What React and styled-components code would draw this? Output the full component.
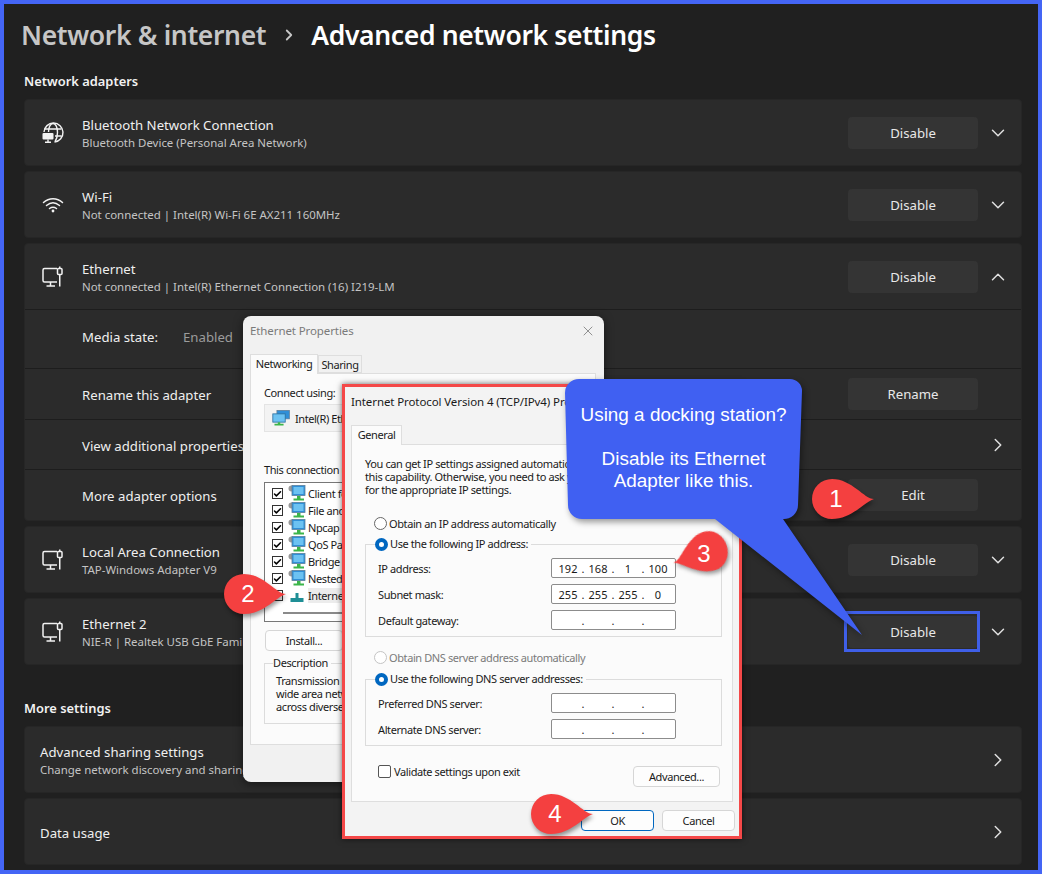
import React from "react";
import styled, { createGlobalStyle } from "styled-components";
import { ChevronDown, ChevronRight, ChevronUp, Check, X } from "lucide-react";

const GlobalStyle = createGlobalStyle`
  * { box-sizing: border-box; }
  html, body { margin: 0; padding: 0; background: #202020; }
`;

const Page = styled.div`
  position: relative;
  width: 1042px;
  height: 874px;
  overflow: hidden;
  padding: 0 16px 0 20px;
  border: 4px solid #4465f5;
  background: #202020;
  color: #fff;
  font-family: "Noto Sans", sans-serif;
`;

const Breadcrumb = styled.h1`
  display: flex;
  align-items: center;
  height: 62px;
  margin: 0 0 0 -3px;
  font-size: 26.5px;
  font-weight: 600;
  letter-spacing: -0.35px;
`;

const Crumb = styled.span`
  color: #c6c6c6;
`;

const CrumbSep = styled.span`
  display: flex;
  width: 45px;
  justify-content: center;
  color: #c6c6c6;
`;

const SectionTitle = styled.h2`
  margin: ${(p) => p.$top || 0}px 0 0;
  height: 33px;
  font-size: 12.9px;
  line-height: 30px;
  font-weight: 600;
  color: #f2f2f2;
`;

const Card = styled.section`
  display: flex;
  flex-direction: column;
  margin-bottom: 5px;
  border-radius: 4px;
  background: #2b2b2b;
  border: 1px solid #262626;
`;

const Row = styled.div`
  display: flex;
  align-items: center;
  height: ${(p) => p.$h || 65}px;
  padding: 0 11px ${(p) => p.$bottom || 0}px ${(p) => p.$left || 57}px;
  border-top: ${(p) => (p.$line ? "1px solid #1d1d1d" : "none")};
`;

const RowIcon = styled.span`
  display: flex;
  width: 24px;
  margin-left: -41px;
  margin-right: 17px;
  color: #f2f2f2;
`;

const RowText = styled.div`
  flex: 1;
  min-width: 0;
  padding-top: 2px;
`;

const RowTitle = styled.div`
  font-size: 13.2px;
  line-height: 18px;
  color: #efefef;
`;

const RowSub = styled.div`
  font-size: 11.45px;
  line-height: 17px;
  color: #c4c4c4;
`;

const StateLabel = styled.span`
  width: 101px;
  font-size: 13.2px;
  color: #efefef;
`;

const StateValue = styled.span`
  font-size: 13.2px;
  color: #9c9c9c;
`;

const ActionButton = styled.div`
  display: flex;
  width: 130px;
  height: 32px;
  align-items: center;
  justify-content: center;
  border-radius: 4px;
  background: #343434;
  font-size: 13.2px;
  color: #e8e8e8;
`;

const ChevronSlot = styled.span`
  display: flex;
  width: 24px;
  margin-left: 8px;
  justify-content: center;
  color: #e0e0e0;
`;

const Window = styled.div`
  position: absolute;
  display: flex;
  flex-direction: column;
  font-family: "Noto Sans", sans-serif;
  color: #1a1a1a;
  font-size: 11px;
  letter-spacing: -0.4px;
`;

const PropsWindow = styled(Window)`
  left: 239px;
  top: 312px;
  width: 361px;
  height: 466px;
  padding: 0 8px 0 7px;
  border-radius: 8px;
  background: #f1f1f1;
  box-shadow: 0 2px 10px rgba(0, 0, 0, 0.5);
`;

const IpWindow = styled(Window)`
  left: 338px;
  top: 380px;
  width: 400px;
  height: 455px;
  padding: 0 6px;
  border: 3px solid #f44848;
  background: #f3f3f3;
  box-shadow: 0 0 6px rgba(0, 0, 0, 0.6);
`;

const TitleBar = styled.div`
  display: flex;
  align-items: center;
  justify-content: space-between;
  height: ${(p) => p.$h}px;
  font-size: 11.5px;
  letter-spacing: -0.1px;
  color: ${(p) => p.$color};
`;

const Tabs = styled.div`
  display: flex;
  align-items: flex-end;
  height: ${(p) => p.$h}px;
`;

const Tab = styled.div`
  position: relative;
  display: flex;
  align-items: center;
  justify-content: center;
  width: ${(p) => p.$w}px;
  height: ${(p) => (p.$active ? 20 : 18)}px;
  padding-bottom: ${(p) => (p.$active ? 2 : 0)}px;
  margin-bottom: ${(p) => (p.$active ? -1 : 0)}px;
  border: 1px solid #dedede;
  border-bottom: ${(p) => (p.$active ? "none" : "1px solid #dedede")};
  background: ${(p) => (p.$active ? "#fbfbfb" : "#f1f1f1")};
`;

const TabPanel = styled.div`
  display: flex;
  flex-direction: column;
  height: ${(p) => p.$h}px;
  padding: ${(p) => p.$pad};
  border: 1px solid #dedede;
  background: #fbfbfb;
  overflow: hidden;
`;

const Label = styled.div`
  height: 14px;
  line-height: 14px;
  margin-top: ${(p) => p.$top || 0}px;
  white-space: nowrap;
`;

const IntroLine = styled.div`
  height: 13px;
  line-height: 13px;
  white-space: nowrap;
`;

const AdapterBox = styled.div`
  display: flex;
  align-items: center;
  gap: 4px;
  height: 28px;
  margin-top: 4px;
  padding-left: 7px;
  border: 1px solid #e4e4e4;
  background: #f3f3f3;
`;

const ItemList = styled.div`
  height: 140px;
  margin-top: 5px;
  padding: 2px 0 0 7px;
  border: 1px solid #777;
  background: #fff;
  overflow: hidden;
`;

const Item = styled.div`
  display: flex;
  align-items: center;
  gap: 2px;
  height: 17px;
  white-space: nowrap;
`;

const ItemName = styled.span`
  background: ${(p) => (p.$selected ? "#ececec" : "transparent")};
`;

const CheckMark = styled.span`
  display: flex;
  flex: none;
  width: 11px;
  height: 11px;
  align-items: center;
  justify-content: center;
  margin-right: 3px;
  border: 1px solid #333;
  background: #fff;
  color: #000;
`;

const ListBar = styled.div`
  width: 200px;
  height: 2px;
  margin: 8px 0 0 11px;
  background: #8a8a8a;
`;

const PlainButton = styled.div`
  display: flex;
  align-items: center;
  justify-content: center;
  flex: none;
  width: ${(p) => p.$w}px;
  height: 21px;
  border: 1px solid ${(p) => (p.$primary ? "#0067c0" : "#d6d6d6")};
  border-radius: 4px;
  background: #fdfdfd;
`;

const Group = styled.fieldset`
  margin: ${(p) => p.$top || 0}px ${(p) => p.$right || 0}px 0 0;
  padding: ${(p) => p.$pad || "0"};
  border: 1px solid #dcdcdc;
  border-radius: 0;
  height: ${(p) => p.$h}px;
  min-width: 0;
  overflow: hidden;
`;

const Legend = styled.legend`
  display: flex;
  align-items: center;
  gap: 2px;
  margin-left: ${(p) => p.$left || 0}px;
  padding: 0 3px 0 0;
  height: 14px;
  line-height: 14px;
`;

const RadioLine = styled.div`
  display: flex;
  align-items: center;
  gap: 2px;
  height: 14px;
  margin: ${(p) => p.$top || 0}px 0 ${(p) => p.$bottom || 7}px 9px;
  color: ${(p) => (p.$off ? "#7a7a7a" : "inherit")};
`;

const Radio = styled.span`
  flex: none;
  width: 13px;
  height: 13px;
  border-radius: 50%;
  background: #fff;
  border: ${(p) => (p.$on ? "4px solid #0067c0" : `1px solid ${p.$off ? "#c4c4c4" : "#666"}`)};
`;

const FieldRow = styled.div`
  display: flex;
  align-items: center;
  justify-content: space-between;
  height: 20px;
  margin-bottom: 6px;
`;

const IpInput = styled.div`
  display: grid;
  grid-template-columns: 26px 4px 26px 4px 26px 4px 26px;
  align-items: center;
  width: 125px;
  height: 20px;
  padding-left: 3px;
  border: 1px solid #8c8c8c;
  border-radius: 2px;
  background: #fff;
  text-align: center;
  letter-spacing: 0;
`;

const ValidateRow = styled.div`
  display: flex;
  align-items: flex-start;
  justify-content: space-between;
  margin: 20px 12px 0 13px;
`;

const ValidateCheck = styled.div`
  display: flex;
  align-items: center;
  gap: 3px;
  height: 14px;
  margin-top: -2px;
`;

const EmptyBox = styled.span`
  width: 13px;
  height: 13px;
  border: 1px solid #555;
  border-radius: 2px;
  background: #fff;
`;

const FooterRow = styled.div`
  display: flex;
  justify-content: flex-end;
  gap: 8px;
  margin-right: -2px;
  padding-top: 8px;
`;

const ButtonRow = styled.div`
  display: flex;
  margin-top: 8px;
  padding-left: 1px;
`;

const DescText = styled.div`
  padding-left: 11px;
  line-height: 13px;
  white-space: nowrap;
`;

const Bubble = styled.div`
  position: absolute;
  left: 561px;
  top: 371px;
  width: 300px;
  height: 260px;
`;

const BubbleShape = styled.svg`
  position: absolute;
  inset: 0;
  filter: drop-shadow(2px 3px 3px rgba(0, 0, 0, 0.4));
`;

const BubbleText = styled.div`
  position: relative;
  width: 237px;
  padding-top: 29px;
  font-family: "Liberation Sans", sans-serif;
  font-size: 18.9px;
  line-height: 22px;
  text-align: center;
  color: #fff;
`;

const Highlight = styled.div`
  position: absolute;
  left: 840px;
  top: 607px;
  width: 136px;
  height: 41px;
  border: 3px solid #3f5fe8;
`;

const PinBox = styled.div`
  position: absolute;
  left: ${(p) => p.$x}px;
  top: ${(p) => p.$y}px;
  display: flex;
  justify-content: ${(p) => (p.$flip ? "flex-end" : "flex-start")};
  width: ${(p) => (p.$flip ? 56 : 62)}px;
  height: 42px;
`;

const PinShape = styled.svg`
  position: absolute;
  inset: 0;
  overflow: visible;
  transform: ${(p) => (p.$flip ? "scaleX(-1) rotate(18deg)" : "none")};
  filter: drop-shadow(${(p) => (p.$flip ? "-1px" : "1px")} 3px 2px rgba(0, 0, 0, 0.4));
`;

const PinNumber = styled.span`
  position: relative;
  width: 48px;
  line-height: 42px;
  text-align: center;
  font-family: "Liberation Sans", sans-serif;
  font-size: 24px;
  color: #fff;
`;

const ListIcon = styled.svg`
  flex: none;
`;

const Monitor = () => (
  <svg width="24" height="24" viewBox="0 0 24 24" fill="none" stroke="currentColor" strokeWidth="1.5">
    <path d="M16 3.500H3.500A1.500 1.500 0 0 0 2 5V15.500A1.500 1.500 0 0 0 3.500 17H16" />
    <path d="M9.500 17V20.500M5.500 21H14" />
    <rect x="16.500" y="3.500" width="4.500" height="6" rx="1" />
    <path d="M18.750 1.500V3.500M18.750 9.500V21.500" />
  </svg>
);

const GlobeMonitor = () => (
  <svg width="24" height="24" viewBox="0 0 24 24" fill="none" stroke="currentColor" strokeWidth="1.4">
    <path d="M3 11A9.500 9.500 0 1 1 13.500 21" />
    <path d="M7.500 11C7.500 6 9.500 2.500 12 2.500S16.500 6 16.500 11.500 15 19 14 20.500M3.500 8H20.500M14 15H20.500" />
    <rect x="1.500" y="12" width="11" height="6.500" rx="1" fill="currentColor" stroke="none" />
    <path d="M7 18.500V21M4 21.200H10" />
  </svg>
);

const WifiIcon = () => (
  <svg width="24" height="24" viewBox="0 0 24 24" fill="none" stroke="currentColor" strokeWidth="1.5" strokeLinecap="round">
    <path d="M2.500 9.500C8 4.500 16 4.500 21.500 9.500" />
    <path d="M5.500 12.500C9.500 9 14.500 9 18.500 12.500" />
    <path d="M8.500 15.500C10.500 14 13.500 14 15.500 15.500" />
    <circle cx="12" cy="18" r="1.400" fill="currentColor" stroke="none" />
  </svg>
);

const NetIcon = () => (
  <ListIcon width="18" height="17" viewBox="0 0 18 17">
    <circle cx="3.500" cy="3.500" r="3" fill="#9a9a9a" />
    <rect x="4" y="0.500" width="13" height="10" fill="#2f8fd8" stroke="#5c7f9c" strokeWidth="0.8" />
    <rect x="5.500" y="2" width="10" height="7" fill="#6cc2f2" />
    <path d="M9 11H12.500V13.500H16V15.500H5.500V13.500H9Z" fill="#3cb54a" />
  </ListIcon>
);

const ProtocolIcon = () => (
  <ListIcon width="18" height="17" viewBox="0 0 18 17">
    <path d="M7.500 6H10.500V11H15.500V15H2.500V11H7.500Z" fill="#1f8f96" />
  </ListIcon>
);

const AdapterIcon = () => (
  <ListIcon width="19" height="18" viewBox="0 0 23 20">
    <rect x="6" y="1" width="15" height="10" fill="#2f8fd8" stroke="#5c7f9c" />
    <rect x="1" y="5" width="15" height="10" fill="#6cc2f2" stroke="#2a6f9f" />
    <path d="M7 15H10V17H14V19H3V17H7Z" fill="#3cb54a" />
  </ListIcon>
);

const Pin = ({ x, y, n, flip }) => (
  <PinBox $x={x} $y={y} $flip={flip}>
    <PinShape $flip={flip} width={flip ? 56 : 62} height="42" viewBox="0 0 62 42" preserveAspectRatio="none">
      <path d="M62 21C52 21 40 1 20 1A20 20 0 0 0 20 41C40 41 52 24 62 21Z" fill="#f44040" />
    </PinShape>
    <PinNumber>{n}</PinNumber>
  </PinBox>
);

const Octets = ({ v = ["", "", "", ""] }) => (
  <IpInput>
    <span>{v[0]}</span>
    <span>.</span>
    <span>{v[1]}</span>
    <span>.</span>
    <span>{v[2]}</span>
    <span>.</span>
    <span>{v[3]}</span>
  </IpInput>
);

const Adapter = ({ icon, title, sub, open }) => (
  <Row>
    <RowIcon>{icon}</RowIcon>
    <RowText>
      <RowTitle>{title}</RowTitle>
      <RowSub>{sub}</RowSub>
    </RowText>
    <ActionButton>Disable</ActionButton>
    <ChevronSlot>
      {open ? <ChevronUp size={22} strokeWidth={1.6} /> : <ChevronDown size={22} strokeWidth={1.6} />}
    </ChevronSlot>
  </Row>
);

const components = [
  "Client for Microsoft Networks",
  "File and Printer Sharing",
  "Npcap Packet Driver",
  "QoS Packet Scheduler",
  "Bridge Driver",
  "Nested Network Virtualization",
];

export default function App() {
  return (
    <Page>
      <GlobalStyle />
      <Breadcrumb>
        <Crumb>Network &amp; internet</Crumb>
        <CrumbSep>
          <ChevronRight size={18} strokeWidth={2.4} />
        </CrumbSep>
        <span>Advanced network settings</span>
      </Breadcrumb>

      <SectionTitle>Network adapters</SectionTitle>
      <Card>
        <Adapter icon={<GlobeMonitor />} title="Bluetooth Network Connection" sub="Bluetooth Device (Personal Area Network)" />
      </Card>
      <Card>
        <Adapter icon={<WifiIcon />} title="Wi-Fi" sub="Not connected | Intel(R) Wi-Fi 6E AX211 160MHz" />
      </Card>
      <Card>
        <Adapter icon={<Monitor />} title="Ethernet" sub="Not connected | Intel(R) Ethernet Connection (16) I219-LM" open />
        <Row $h={59} $bottom={5} $line>
          <StateLabel>Media state:</StateLabel>
          <StateValue>Enabled</StateValue>
        </Row>
        <Row $h={51} $line>
          <RowText>
            <RowTitle>Rename this adapter</RowTitle>
          </RowText>
          <ActionButton>Rename</ActionButton>
          <ChevronSlot />
        </Row>
        <Row $h={50} $line>
          <RowText>
            <RowTitle>View additional properties</RowTitle>
          </RowText>
          <ChevronSlot>
            <ChevronRight size={22} strokeWidth={1.6} />
          </ChevronSlot>
        </Row>
        <Row $h={51} $line>
          <RowText>
            <RowTitle>More adapter options</RowTitle>
          </RowText>
          <ActionButton>Edit</ActionButton>
          <ChevronSlot />
        </Row>
      </Card>
      <Card>
        <Adapter icon={<Monitor />} title="Local Area Connection" sub="TAP-Windows Adapter V9" />
      </Card>
      <Card>
        <Adapter icon={<Monitor />} title="Ethernet 2" sub="NIE-R | Realtek USB GbE Family Controller" />
      </Card>

      <SectionTitle $top={28}>More settings</SectionTitle>
      <Card>
        <Row $left={15}>
          <RowText>
            <RowTitle>Advanced sharing settings</RowTitle>
            <RowSub>Change network discovery and sharing settings</RowSub>
          </RowText>
          <ChevronSlot>
            <ChevronRight size={22} strokeWidth={1.6} />
          </ChevronSlot>
        </Row>
      </Card>
      <Card>
        <Row $left={15}>
          <RowText>
            <RowTitle>Data usage</RowTitle>
          </RowText>
          <ChevronSlot>
            <ChevronRight size={22} strokeWidth={1.6} />
          </ChevronSlot>
        </Row>
      </Card>

      <Highlight />

      <PropsWindow>
        <TitleBar $h={29} $color="#7a7a7a">
          Ethernet Properties
          <X size={16} strokeWidth={1.2} color="#777" />
        </TitleBar>
        <Tabs $h={28}>
          <Tab $w={68} $active>Networking</Tab>
          <Tab $w={44}>Sharing</Tab>
        </Tabs>
        <TabPanel $h={372} $pad="12px 13px 0">
          <Label>Connect using:</Label>
          <AdapterBox>
            <AdapterIcon />
            Intel(R) Ethernet Connection
          </AdapterBox>
          <Label $top={31}>This connection uses the following items:</Label>
          <ItemList>
            {components.map((name) => (
              <Item key={name}>
                <CheckMark>
                  <Check size={10} strokeWidth={4} />
                </CheckMark>
                <NetIcon />
                <ItemName>{name}</ItemName>
              </Item>
            ))}
            <Item>
              <CheckMark />
              <ProtocolIcon />
              <ItemName $selected>Internet Protocol Version 4 (TCP/IPv4)</ItemName>
            </Item>
            <ListBar />
          </ItemList>
          <ButtonRow>
            <PlainButton $w={78}>Install...</PlainButton>
          </ButtonRow>
          <Group $top={5} $h={68} $pad="4px 0 0">
            <Legend $left={8}>Description</Legend>
            <DescText>
              Transmission Control Protocol/Internet Protocol.
              <br />
              wide area network protocol that provides
              <br />
              across diverse interconnected networks.
            </DescText>
          </Group>
        </TabPanel>
      </PropsWindow>

      <IpWindow>
        <TitleBar $h={28} $color="#1a1a1a">Internet Protocol Version 4 (TCP/IPv4) Properties</TitleBar>
        <Tabs $h={29}>
          <Tab $w={51} $active>General</Tab>
        </Tabs>
        <TabPanel $h={358} $pad="12px 0 0 13px">
          <IntroLine>You can get IP settings assigned automatically if your network supports</IntroLine>
          <IntroLine>this capability. Otherwise, you need to ask your network administrator</IntroLine>
          <IntroLine>for the appropriate IP settings.</IntroLine>
          <RadioLine $top={20}>
            <Radio />
            Obtain an IP address automatically
          </RadioLine>
          <Group $right={10} $h={100} $pad="7px 45px 0 12px">
            <Legend $left={-3}>
              <Radio $on />
              Use the following IP address:
            </Legend>
            <FieldRow>
              IP address:
              <Octets v={["192", "168", "1", "100"]} />
            </FieldRow>
            <FieldRow>
              Subnet mask:
              <Octets v={["255", "255", "255", "0"]} />
            </FieldRow>
            <FieldRow>
              Default gateway:
              <Octets />
            </FieldRow>
          </Group>
          <RadioLine $top={13} $bottom={8} $off>
            <Radio $off />
            Obtain DNS server address automatically
          </RadioLine>
          <Group $right={10} $h={74} $pad="7px 45px 0 12px">
            <Legend $left={-3}>
              <Radio $on />
              Use the following DNS server addresses:
            </Legend>
            <FieldRow>
              Preferred DNS server:
              <Octets />
            </FieldRow>
            <FieldRow>
              Alternate DNS server:
              <Octets />
            </FieldRow>
          </Group>
          <ValidateRow>
            <ValidateCheck>
              <EmptyBox />
              Validate settings upon exit
            </ValidateCheck>
            <PlainButton $w={87}>Advanced...</PlainButton>
          </ValidateRow>
        </TabPanel>
        <FooterRow>
          <PlainButton $w={73} $primary>OK</PlainButton>
          <PlainButton $w={73}>Cancel</PlainButton>
        </FooterRow>
      </IpWindow>

      <Bubble>
        <BubbleShape width="300" height="260" viewBox="0 0 300 260">
          <path
            d="M14 4H225A12 12 0 0 1 237 16L233 130A14 14 0 0 1 218 144L297 260L150 144H17A14 14 0 0 1 3 130L0 18A14 14 0 0 1 14 4Z"
            fill="#4060f2"
          />
        </BubbleShape>
        <BubbleText>
          Using a docking station?
          <br />
          <br />
          Disable its Ethernet
          <br />
          Adapter like this.
        </BubbleText>
      </Bubble>

      <Pin x={808} y={474} n="1" />
      <Pin x={220} y={569} n="2" />
      <Pin x={668} y={529} n="3" flip />
      <Pin x={527} y={789} n="4" />
    </Page>
  );
}
